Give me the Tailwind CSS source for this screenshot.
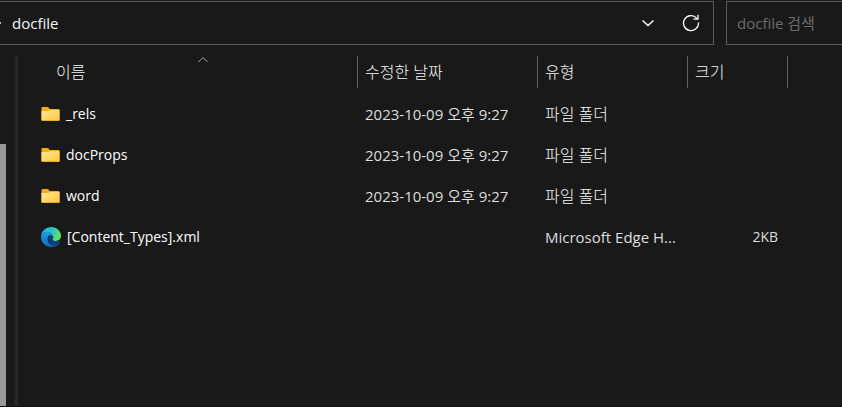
<!DOCTYPE html>
<html lang="ko">
<head>
  <meta charset="UTF-8">
  <meta name="viewport" content="width=device-width, initial-scale=1.0">
  <title>docfile</title>
  <script src="https://cdn.jsdelivr.net/npm/@tailwindcss/browser@4"></script>
</head>
<body class="flex h-screen flex-col overflow-hidden border-b border-[#120d12] bg-[#191919] font-['Open_Sans','Noto_Sans_CJK_KR',sans-serif] text-[15px] leading-5 text-[#dedede]">
  <!-- Shared icon shapes -->
  <svg class="absolute h-0 w-0" aria-hidden="true">
    <defs>
      <linearGradient id="folderFront" x1="0" y1="0" x2="1" y2="1">
        <stop offset="0" stop-color="#ffe69b"/>
        <stop offset="1" stop-color="#ffc937"/>
      </linearGradient>
      <symbol id="folder" viewBox="0 0 18 14">
        <path d="M0 1q0-1 1-1h5q.6 0 1 .5L8.200 2H17q1 0 1 1v10H0z" fill="#f8ad18"/>
        <path d="M0 4h6.500q.7 0 1.200-.5L8.500 3H18v10q0 1-1 1H1q-1 0-1-1z" fill="url(#folderFront)"/>
        <path d="M0 13h18q0 1-1 1H1q-1 0-1-1z" fill="#eda92a"/>
      </symbol>
    </defs>
  </svg>

  <header class="flex h-[45px] shrink-0 gap-3 pt-px">
    <div class="flex min-w-0 flex-1 items-center border-y border-r border-[#5b5b5b] text-white">
      <span class="mr-[11px] h-[2px] w-px bg-[#bbbbbb]"></span>
      <a href="#" class="flex-1 text-[#f5f5f5]">docfile</a>
      <button type="button" aria-label="이전 위치" class="mr-[23px] flex h-8 w-5 items-center justify-center">
        <svg class="h-4 w-4" viewBox="0 0 16 16" fill="none" stroke="currentColor" stroke-width="1.400"><path d="M2.500 5.500 8 10.500l5.500-5"/></svg>
      </button>
      <button type="button" aria-label="새로 고침" class="mr-3 flex h-8 w-5 items-center justify-center">
        <svg class="h-[18px] w-[18px]" viewBox="0 0 18 18" fill="none" stroke="currentColor" stroke-width="1.300"><path d="M16.500 8.500A7.500 7.500 0 1 1 14.800 4.300M16 .8V5.200h-4.600"/></svg>
      </button>
    </div>
    <input type="search" aria-label="docfile 검색" placeholder="docfile 검색" class="w-[116px] shrink-0 border-y border-l border-[#5b5b5b] bg-transparent pl-[10px] outline-none placeholder:text-[#6b6b6b]">
  </header>

  <main class="flex min-h-0 flex-1 pt-[11px]">
    <!-- Navigation pane scrollbar and splitter -->
    <div class="flex w-[14px] shrink-0 items-stretch pt-[88px]">
      <div class="w-[6px] bg-[#999999]"></div>
    </div>
    <div class="w-1 shrink-0 border-l border-[#1d1d1d] bg-[#272727]"></div>

    <div class="min-w-0 flex-1">
      <table class="w-full table-fixed border-collapse text-left">
        <colgroup>
          <col class="w-[340px]">
          <col class="w-[180px]">
          <col class="w-[150px]">
          <col class="w-[100px]">
          <col>
        </colgroup>
        <thead class="text-base text-[#f5f5f5]">
          <tr>
            <th scope="col" aria-sort="ascending" class="p-0 pb-[5px] font-light">
              <div class="relative flex h-8 items-center border-r border-[#636363] pl-[38px]">
                이름
                <svg class="absolute top-0 left-[179px] h-2 w-3" viewBox="0 0 12 8" fill="none" stroke="#b0b0b0"><path d="M1.500 6 6 1.500 10.500 6"/></svg>
              </div>
            </th>
            <th scope="col" class="p-0 pb-[5px] font-light"><div class="flex h-8 items-center border-r border-[#636363] pl-[7px]">수정한 날짜</div></th>
            <th scope="col" class="p-0 pb-[5px] font-light"><div class="flex h-8 items-center border-r border-[#636363] pl-[7px]">유형</div></th>
            <th scope="col" class="p-0 pb-[5px] font-light"><div class="flex h-8 items-center border-r border-[#636363] pl-[7px]">크기</div></th>
            <td></td>
          </tr>
        </thead>
        <tbody>
          <tr class="h-[41px]">
            <td class="p-0 pl-[23px] text-sm text-white"><div class="flex items-center gap-[6px]"><svg class="h-[14px] w-[19px]"><use href="#folder"/></svg>_rels</div></td>
            <td class="p-0 pl-[7px]">2023-10-09 오후 9:27</td>
            <td class="p-0 pl-[7px] text-base font-light text-[#f5f5f5]">파일 폴더</td>
            <td></td>
            <td></td>
          </tr>
          <tr class="h-[41px]">
            <td class="p-0 pl-[23px] text-sm text-white"><div class="flex items-center gap-[6px]"><svg class="h-[14px] w-[19px]"><use href="#folder"/></svg>docProps</div></td>
            <td class="p-0 pl-[7px]">2023-10-09 오후 9:27</td>
            <td class="p-0 pl-[7px] text-base font-light text-[#f5f5f5]">파일 폴더</td>
            <td></td>
            <td></td>
          </tr>
          <tr class="h-[41px]">
            <td class="p-0 pl-[23px] text-sm text-white"><div class="flex items-center gap-[6px]"><svg class="h-[14px] w-[19px]"><use href="#folder"/></svg>word</div></td>
            <td class="p-0 pl-[7px]">2023-10-09 오후 9:27</td>
            <td class="p-0 pl-[7px] text-base font-light text-[#f5f5f5]">파일 폴더</td>
            <td></td>
            <td></td>
          </tr>
          <tr class="h-[41px]">
            <td class="p-0 pl-[23px] text-sm text-white">
              <div class="flex items-center gap-[6px]">
                <svg class="h-5 w-5" viewBox="0 0 20 20">
                  <defs>
                    <linearGradient id="edgeTop" x1="0" y1=".3" x2="1" y2=".6">
                      <stop offset="0" stop-color="#27a9df"/>
                      <stop offset=".5" stop-color="#30c6c5"/>
                      <stop offset="1" stop-color="#6be652"/>
                    </linearGradient>
                    <linearGradient id="edgeLeft" x1="0" y1="0" x2="0" y2="1">
                      <stop offset="0" stop-color="#1d9de2"/>
                      <stop offset="1" stop-color="#1269c0"/>
                    </linearGradient>
                  </defs>
                  <path d="M0 9C.7 3.600 5 0 10 0c5.800 0 10 4.300 10 8.800 0 3.200-2.400 5.200-5.300 5.200-2.200 0-3.400-.8-3.400-1.600 0-.6.900-1 .9-2.500C12.200 7.200 9 5 6 5 3 5 1 6.700 0 9z" fill="url(#edgeTop)"/>
                  <path d="M9 8.300c-1.600.5-2.200 1.900-2.200 3.300 0 3.200 3 5.600 6.800 5.600 1.800 0 3.200-.5 4.500-1.300.4-.2.800.1.500.5-1.300 1.900-3.400 3.200-5.700 3.500-3.900-.2-7.500-3.500-7.500-7.400C5.400 10 7 8.300 9 8.300z" fill="#124a91"/>
                  <path d="M9.400 8.200c1.200-.1 2.200.6 2.800 1.600 0 1.500-.9 2-.9 2.600 0 .8 1.200 1.600 3.400 1.600 1.600 0 3-.6 4-1.600l-.2 3.300-4.500 1.700-5-2-2.200-4z" fill="#103f7c"/>
                  <path d="M0 10C0 7 2.500 4.800 6 4.800c3.500 0 6.200 2.300 6.200 5-.6-1-1.600-1.600-2.800-1.600-2.200 0-3.400 2.600-2.800 5.500.6 3 2.900 5.500 6 6.100-.9.200-1.700.2-2.600.2C4.400 20 0 15.500 0 10z" fill="url(#edgeLeft)"/>
                </svg>
                [Content_Types].xml
              </div>
            </td>
            <td></td>
            <td class="p-0 pl-[7px]">Microsoft Edge H...</td>
            <td class="p-0 pr-[10px] text-right text-sm">2KB</td>
            <td></td>
          </tr>
        </tbody>
      </table>
    </div>
  </main>
</body>
</html>
